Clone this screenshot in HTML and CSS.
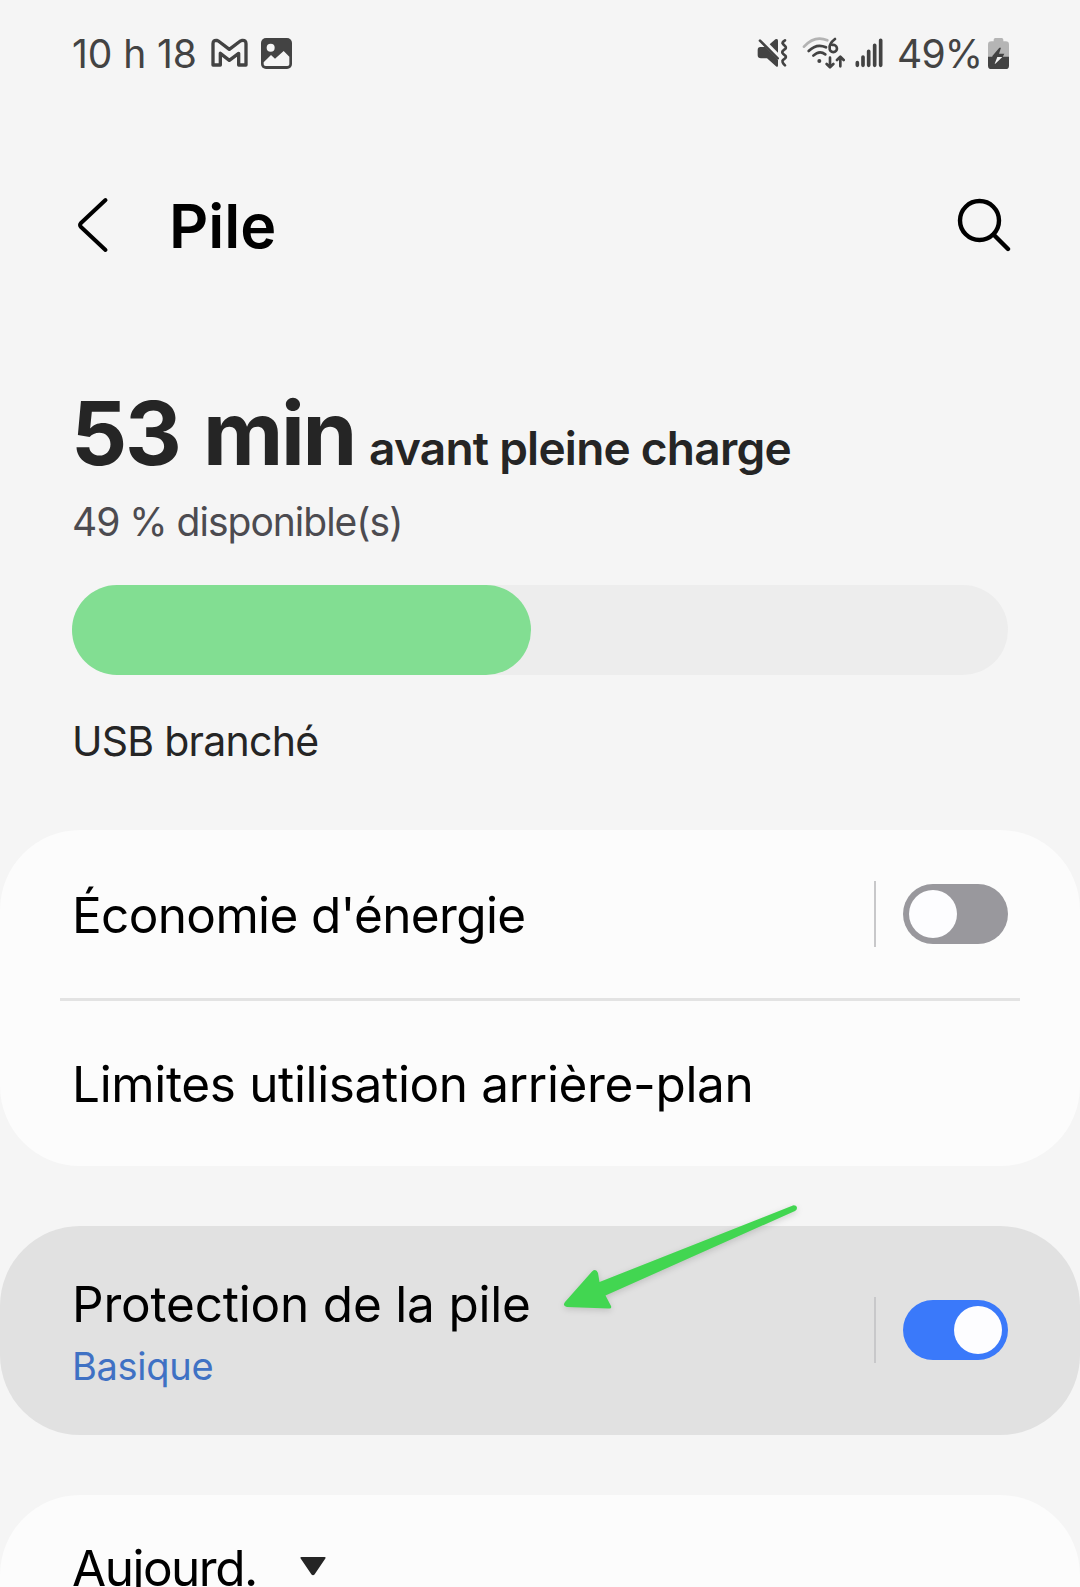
FILE: index.html
```html
<!DOCTYPE html>
<html lang="fr">
<head>
<meta charset="utf-8">
<title>Pile</title>
<link rel="stylesheet" href="styles.css">
</head>
<body>
<div class="screen">
  <div class="status">
    <span class="clock">10 h 18</span>
    <svg class="ic-mail" width="37" height="30" viewBox="0 0 111 90"><path d="M6 17Q6 6 17 7L22 9L55 34L88 9L94 7Q105 6 105 17V81H83V46L55 67L28 46V81H6Z" fill="none" stroke="#434343" stroke-width="10" stroke-linejoin="round"/></svg>
    <svg class="ic-image" width="31" height="31" viewBox="0 0 93 93"><rect width="93" height="93" rx="15" fill="#434343"/><circle cx="29" cy="29" r="12" fill="#f5f5f5"/><path d="M8 73L30 51L42 62L68 39L85 56V79Q85 84 79 84H14Q8 84 8 79Z" fill="#f5f5f5"/></svg>
    <span class="spacer"></span>
    <svg class="ic-mute" width="31" height="30" viewBox="0 0 93 90"><g fill="#434343"><path d="M2 36Q2 27 10 27H24L63 66V82Q63 90 56 84L30 61H12Q2 61 2 52Z"/><path d="M38 19L55 4Q63 0 63 8V44Z"/></g><g fill="none" stroke="#434343" stroke-width="8" stroke-linecap="round" stroke-linejoin="round"><path d="M9 8L62 61"/><path d="M84 7Q73 14 78 18L85 25Q89 30 83 34L78 38Q74 43 78 47L85 53Q89 58 83 62L78 66Q73 71 84 82"/></g></svg>
    <svg class="ic-wifi" width="43" height="33" viewBox="0 0 129 99"><g fill="none" stroke-width="8" stroke-linecap="round" stroke-linejoin="round"><path d="M6 29Q38 -6 76 10" stroke="#b3b3b3"/><g stroke="#434343"><path d="M20 42Q44 18 72 31M34 56Q52 38 70 52"/><path d="M99 6Q81 20 83 33A11 11 0 1 0 91 24"/><path d="M84 62V90M74 81L84 91L94 81M115 88V60M105 69L115 59L125 69"/></g></g><circle cx="52" cy="72" r="6" fill="#434343"/></svg>
    <svg class="ic-signal" width="28" height="30" viewBox="0 0 84 90"><path d="M7 74V82M24 57V82M41 40V82M59 22V82M77 7V82" stroke="#434343" stroke-width="11" stroke-linecap="round"/></svg>
    <span class="percent">49%</span>
    <svg class="ic-battery" width="21" height="31" viewBox="0 0 63 93"><path d="M17 10V5Q17 0 22 0H41Q46 0 46 5V10H53Q63 10 63 20V57H0V20Q0 10 10 10Z" fill="#b5b5b5"/><path d="M0 56H63V83Q63 93 53 93H10Q0 93 0 83Z" fill="#434343"/><path d="M34 29L13 54V57H44L49 47H33L39 29Z" fill="#434343"/><path d="M28 57H43L22 77H20Z" fill="#f5f5f5"/></svg>
  </div>

  <header class="header">
    <svg class="back" width="34" height="58" viewBox="0 0 34 58"><path d="M29.500 4L5 27Q3 29 5 31L29.500 54" fill="none" stroke="#000" stroke-width="4" stroke-linecap="round" stroke-linejoin="round"/></svg>
    <h1 class="title">Pile</h1>
    <svg class="search" width="56" height="56" viewBox="0 0 56 56"><circle cx="24.500" cy="23.500" r="19.500" fill="none" stroke="#000" stroke-width="4.400"/><path d="M38.500 37.500L53 52" stroke="#000" stroke-width="4.400" stroke-linecap="round"/></svg>
  </header>

  <section class="summary">
    <div class="remaining"><span class="time">53 min</span><span class="until">avant pleine charge</span></div>
    <div class="available">49 % disponible(s)</div>
    <div class="meter"><div class="meter-fill" style="width:49%"></div></div>
    <div class="source">USB branché</div>
  </section>

  <section class="card">
    <div class="row row-saver">
      <span class="label saver">Économie d'énergie</span>
      <span class="rule"></span>
      <span class="toggle"><span class="knob"></span></span>
    </div>
    <div class="divider"></div>
    <div class="row row-limits"><span class="label limits">Limites utilisation arrière-plan</span></div>
  </section>

  <section class="card pressed">
    <div class="stack">
      <span class="label protect">Protection de la pile</span>
      <span class="mode">Basique</span>
    </div>
    <span class="rule"></span>
    <span class="toggle on"><span class="knob"></span></span>
    <svg class="arrow" width="250" height="120" viewBox="0 0 250 120"><path d="M243.500 5.200Q247 5.500 247 8Q247 10 245 11L55.500 95.500L61 106Q62 109 58.500 108.500L17 107Q12 106 15 102L42 71.500Q46 68 48 73L49.500 82Z" fill="#42d651"/></svg>
  </section>

  <section class="card usage">
    <span class="label day">Aujourd.</span>
    <svg class="caret" width="26" height="19" viewBox="0 0 26 19"><path d="M1.500 0H24.500Q26.500 0 25 2L14.500 17.500Q13 19 11.500 17.500L1 2Q-.5 0 1.500 0Z" fill="#252525"/></svg>
  </section>
</div>
</body>
</html>
```
FILE: styles.css
```css
* { box-sizing: border-box; }
body { margin: 0; background: #f5f5f5; font-family: Inter, Roboto, sans-serif; color: #000; }
.screen { width: 1080px; height: 1587px; overflow: hidden; }
svg { display: block; flex: none; }
span, .available, .source { white-space: nowrap; }

.status { display: flex; align-items: center; height: 106px; padding: 0 71px 0 72px; font-size: 39px; color: #434343; }
.clock { width: 139px; letter-spacing: -0.1px; }
.ic-image { margin-left: 13px; }
.spacer { flex: 1; }
.ic-wifi { margin-left: 14px; }
.ic-signal { margin-left: 10px; }
.percent { width: 91px; margin-left: 14px; letter-spacing: -0.8px; }

.header { display: flex; align-items: center; height: 90px; margin-top: 74px; padding: 0 69px 0 76px; }
.title { flex: 1; margin: 2px 0 0 59px; font-size: 61px; font-weight: 600; line-height: 90px; letter-spacing: 0; }

.summary { padding: 113px 72px 0; }
.remaining { display: flex; align-items: baseline; height: 99px; line-height: 100px; color: #252525; }
.time { width: 298px; margin-left: -1px; font-size: 88px; font-weight: 700; letter-spacing: -2.3px; word-spacing: 5px; }
.until { font-size: 46px; font-weight: 600; letter-spacing: -0.75px; }
.available { margin-top: 15px; font-size: 39px; line-height: 50px; letter-spacing: -1px; color: #4c4b50; }
.meter { height: 90px; margin-top: 38px; border-radius: 45px; background: #ededed; }
.meter-fill { height: 90px; border-radius: 45px; background: #82de92; }
.source { margin-top: 41px; font-size: 41px; line-height: 50px; letter-spacing: -0.75px; color: #252525; }

.card { margin-top: 64px; border-radius: 80px; background: #fcfcfc; }
.row { display: flex; align-items: center; padding: 0 72px; }
.row-saver { height: 168px; }
.row-limits { height: 165px; }
.label { font-size: 49.500px; line-height: 60px; }
.row .label { flex: 1; }
.saver { padding-top: 2px; letter-spacing: -0.65px; }
.limits { letter-spacing: -0.35px; }
.protect { letter-spacing: -0.2px; }
.divider { height: 3px; margin: 0 60px; background: #e3e3e3; }
.rule { width: 2px; height: 66px; margin-right: 27px; background: #c8c8ca; }
.toggle { display: flex; width: 105px; height: 60px; padding: 6px; border-radius: 30px; background: #99989d; }
.knob { width: 48px; height: 48px; border-radius: 50%; background: #fdfdff; }
.toggle.on { justify-content: flex-end; background: #3a79fa; }

.pressed { position: relative; display: flex; align-items: center; height: 209px; margin-top: 60px; padding: 3px 72px 0; background: #e1e1e1; }
.stack { display: flex; flex: 1; flex-direction: column; gap: 7px; }
.mode { font-size: 38px; line-height: 50px; letter-spacing: -0.3px; color: #3f71c4; }
.pressed .rule, .pressed .toggle { margin-top: -5px; }
.arrow { position: absolute; left: 550px; top: -26px; filter: drop-shadow(0 2px 3px rgba(0, 0, 0, .15)); }

.usage { display: flex; align-items: flex-start; height: 200px; margin-top: 60px; padding: 43px 72px; }
.day { width: 228px; letter-spacing: -1.5px; }
.caret { margin-top: 19px; }
```
